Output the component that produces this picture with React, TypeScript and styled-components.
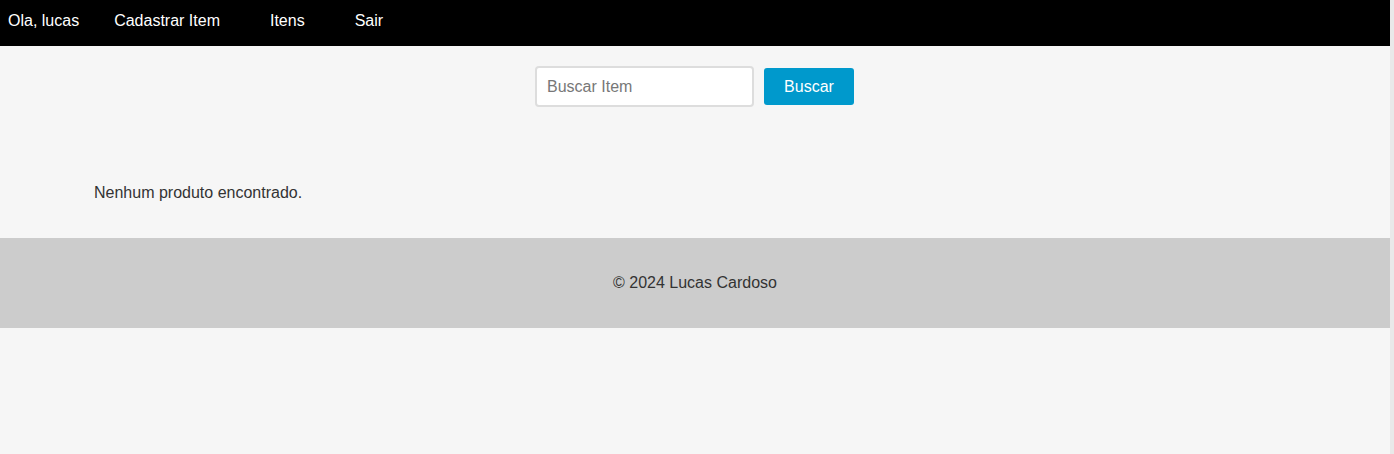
import { useState } from 'react'
import styled, { createGlobalStyle } from 'styled-components'

const GlobalStyle = createGlobalStyle`
  html, body {
    margin: 0;
    padding: 0;
    background: #e9e9e9;
    font-family: 'Liberation Sans', Arial, sans-serif;
  }
  #root {
    width: calc(100% - 4px);
    min-height: 100vh;
    background: #f6f6f6;
  }
`

const Header = styled.header`
  height: 46px;
  box-sizing: border-box;
  background: #000;
  color: #fff;
  display: flex;
  align-items: flex-start;
  padding: 12px 8px 0;
  font-size: 16px;
`

const NavItem = styled.a<{ $gap: number }>`
  color: #fff;
  text-decoration: none;
  margin-right: ${(p) => p.$gap}px;
  cursor: pointer;
`

const SearchForm = styled.form`
  display: flex;
  justify-content: center;
  align-items: center;
  gap: 10px;
  margin-top: 20px;
  padding-right: 1px;
`

const SearchInput = styled.input`
  width: 219px;
  height: 41px;
  box-sizing: border-box;
  border: 2px solid #ddd;
  border-radius: 4px;
  padding: 0 10px;
  font-family: inherit;
  font-size: 16px;
  color: #333;
  background: #fff;
  outline: none;

  &::placeholder {
    color: #777;
  }
`

const SearchButton = styled.button`
  width: 90px;
  height: 37px;
  border: none;
  border-radius: 3px;
  background: #0099cc;
  color: #fff;
  font-family: inherit;
  font-size: 16px;
  cursor: pointer;
`

const Results = styled.section`
  padding: 77px 94px 36px;
  color: #333;
  font-size: 16px;
`

const Footer = styled.footer`
  background: #ccc;
  color: #333;
  font-size: 16px;
  text-align: center;
  padding: 36px 0 36px;
`

const App = () => {
  const [query, setQuery] = useState('')

  return (
    <>
      <GlobalStyle />
      <Header>
        <NavItem $gap={35}>Ola, lucas</NavItem>
        <NavItem $gap={50}>Cadastrar Item</NavItem>
        <NavItem $gap={50}>Itens</NavItem>
        <NavItem $gap={0}>Sair</NavItem>
      </Header>
      <SearchForm onSubmit={(e) => e.preventDefault()}>
        <SearchInput
          placeholder="Buscar Item"
          value={query}
          onChange={(e) => setQuery(e.target.value)}
        />
        <SearchButton type="submit">Buscar</SearchButton>
      </SearchForm>
      <Results>Nenhum produto encontrado.</Results>
      <Footer>© 2024 Lucas Cardoso</Footer>
    </>
  )
}

export default App
